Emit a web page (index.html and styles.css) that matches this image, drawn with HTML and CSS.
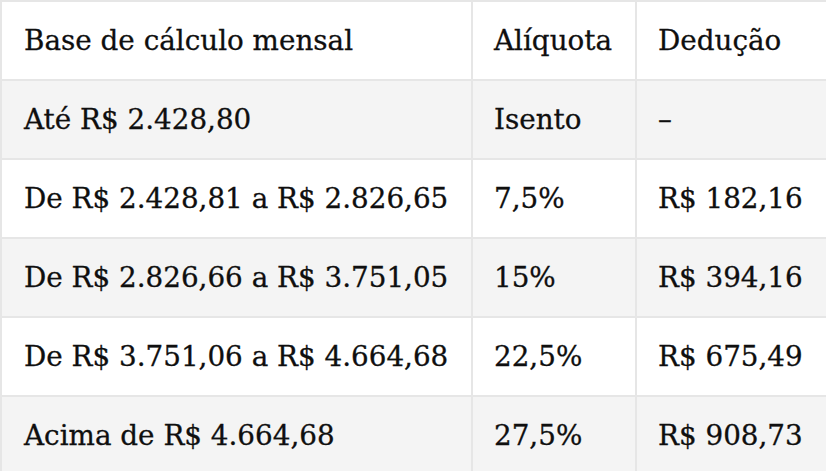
FILE: index.html
```html
<!DOCTYPE html>
<html lang="pt-BR">
<head>
<meta charset="utf-8">
<title>Tabela IR</title>
<link rel="stylesheet" href="styles.css">
</head>
<body>
<table class="tax-table">
  <colgroup>
    <col class="col-base">
    <col class="col-rate">
    <col class="col-ded">
  </colgroup>
  <thead>
    <tr>
      <th>Base de cálculo mensal</th>
      <th>Alíquota</th>
      <th>Dedução</th>
    </tr>
  </thead>
  <tbody>
    <tr><td>Até R$ 2.428,80</td><td>Isento</td><td>–</td></tr>
    <tr><td>De R$ 2.428,81 a R$ 2.826,65</td><td>7,5%</td><td>R$ 182,16</td></tr>
    <tr><td>De R$ 2.826,66 a R$ 3.751,05</td><td>15%</td><td>R$ 394,16</td></tr>
    <tr><td>De R$ 3.751,06 a R$ 4.664,68</td><td>22,5%</td><td>R$ 675,49</td></tr>
    <tr><td>Acima de R$ 4.664,68</td><td>27,5%</td><td>R$ 908,73</td></tr>
  </tbody>
</table>
</body>
</html>
```
FILE: styles.css
```css
html, body {
  margin: 0;
  padding: 0;
  background: #ffffff;
}

.tax-table {
  width: 840px;
  table-layout: fixed;
  border-collapse: separate;
  border-spacing: 0;
  border-top: 2px solid #e6e6e6;
  border-left: 2px solid #e6e6e6;
  font-family: "DejaVu Serif", "Liberation Serif", serif;
  font-size: 27.8px;
  color: #0f0f0f;
}

.col-base { width: 471px; }
.col-rate { width: 164px; }
.col-ded { width: 205px; }

.tax-table th,
.tax-table td {
  box-sizing: border-box;
  height: 79px;
  padding: 0 0 0 21px;
  border-right: 2px solid #e6e6e6;
  border-bottom: 2px solid #e6e6e6;
  text-align: left;
  vertical-align: middle;
  font-weight: normal;
  white-space: nowrap;
  -webkit-text-stroke: 0.3px #0f0f0f;
}

.tax-table tr > :first-child {
  padding-left: 22px;
}

.tax-table tbody tr:nth-child(odd) {
  background: #f4f4f4;
}

.tax-table tbody tr:nth-child(even) {
  background: #ffffff;
}
```
